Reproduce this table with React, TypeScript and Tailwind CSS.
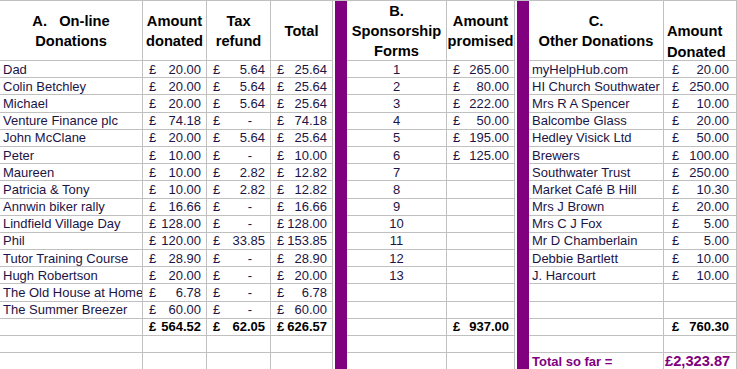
import React from "react";

type ARow = [string, string, string, string];

const online: ARow[] = [
  ["Dad", "20.00", "5.64", "25.64"],
  ["Colin Betchley", "20.00", "5.64", "25.64"],
  ["Michael", "20.00", "5.64", "25.64"],
  ["Venture Finance plc", "74.18", "-", "74.18"],
  ["John McClane", "20.00", "5.64", "25.64"],
  ["Peter", "10.00", "-", "10.00"],
  ["Maureen", "10.00", "2.82", "12.82"],
  ["Patricia & Tony", "10.00", "2.82", "12.82"],
  ["Annwin biker rally", "16.66", "-", "16.66"],
  ["Lindfield Village Day", "128.00", "-", "128.00"],
  ["Phil", "120.00", "33.85", "153.85"],
  ["Tutor Training Course", "28.90", "-", "28.90"],
  ["Hugh Robertson", "20.00", "-", "20.00"],
  ["The Old House at Home", "6.78", "-", "6.78"],
  ["The Summer Breezer", "60.00", "-", "60.00"],
];

const promised = ["265.00", "80.00", "222.00", "50.00", "195.00", "125.00"];

const other: [string, string][] = [
  ["myHelpHub.com", "20.00"],
  ["HI Church Southwater", "250.00"],
  ["Mrs R A Spencer", "10.00"],
  ["Balcombe Glass", "20.00"],
  ["Hedley Visick Ltd", "50.00"],
  ["Brewers", "100.00"],
  ["Southwater Trust", "250.00"],
  ["Market Café B Hill", "10.30"],
  ["Mrs J Brown", "20.00"],
  ["Mrs C J Fox", "5.00"],
  ["Mr D Chamberlain", "5.00"],
  ["Debbie Bartlett", "10.00"],
  ["J. Harcourt", "10.00"],
];

const cell = "border-r border-b border-[#c0c0c0] overflow-hidden whitespace-nowrap";
const head = `${cell} flex items-center justify-center text-center font-bold text-black text-[14.67px] leading-[20px] whitespace-pre`;

function Money({ v, bold, wide }: { v?: string; bold?: boolean; wide?: boolean }) {
  if (!v) return <div className={cell} />;
  return (
    <div
      className={`${cell} flex items-center justify-between ${wide ? "pr-[7px] pl-[8px]" : "pl-[6px] pr-[5px]"} ${bold ? "font-bold text-black" : ""}`}
    >
      <span>£</span>
      {v === "-" ? <span className="pr-[13px]">-</span> : <span>{v}</span>}
    </div>
  );
}

function Bar() {
  return (
    <div className="flex">
      <div className="w-[2px]" />
      <div className="flex-1 bg-[#800080]" />
    </div>
  );
}

export default function App() {
  const rows = Array.from({ length: 18 }, (_, i) => i);
  return (
    <div
      className="w-[737px] h-[369px] overflow-hidden bg-white text-[13px] text-[#1c1446] leading-none"
      style={{ fontFamily: '"Liberation Sans", Arial, sans-serif' }}
    >
      <div className="grid grid-cols-[143px_64px_64px_62px_14px_100px_68px_14px_135px_73px] grid-rows-[60px_repeat(18,17.2px)] border-t border-[#c0c0c0]">
        {/* Header */}
        <div className={head}>{"A.   On-line\nDonations"}</div>
        <div className={head}>{"Amount\ndonated"}</div>
        <div className={head}>{"Tax\nrefund"}</div>
        <div className={head}>Total</div>
        <Bar />
        <div className={head}>{"B.\nSponsorship\nForms"}</div>
        <div className={head}>{"Amount\npromised"}</div>
        <Bar />
        <div className={head}>{"C.\nOther Donations"}</div>
        <div className={`${cell} pl-[3px] pt-[20px] font-bold text-black text-[14.67px] leading-[21px] whitespace-pre`}>
          {"Amount\nDonated"}
        </div>

        {/* Body */}
        {rows.map((i) => {
          const a = online[i];
          const isTotal = i === 15;
          const last = i === 17;
          const c = other[i];
          return (
            <React.Fragment key={i}>
              <div className={`${cell} flex items-center pl-[3px]`}>{a ? a[0] : ""}</div>
              {a ? (
                <>
                  <Money v={a[1]} />
                  <Money v={a[2]} />
                  <Money v={a[3]} />
                </>
              ) : isTotal ? (
                <>
                  <Money v="564.52" bold />
                  <Money v="62.05" bold />
                  <Money v="626.57" bold />
                </>
              ) : (
                <>
                  <div className={cell} />
                  <div className={cell} />
                  <div className={cell} />
                </>
              )}
              <Bar />
              <div className={`${cell} flex items-center justify-center`}>{i < 13 ? i + 1 : ""}</div>
              {isTotal ? <Money v="937.00" bold /> : <Money v={promised[i]} />}
              <Bar />
              {last ? (
                <div className={`${cell} flex items-center pl-[3px] font-bold text-[#800080]`}>
                  Total so far =
                </div>
              ) : (
                <div className={`${cell} flex items-center pl-[3px]`}>{c ? c[0] : ""}</div>
              )}
              {last ? (
                <div className={`${cell} flex items-center justify-between pl-[1px] pr-[7px] font-bold text-[#800080] text-[14.67px]`}>
                  <span>£</span>
                  <span>2,323.87</span>
                </div>
              ) : isTotal ? (
                <Money v="760.30" bold wide />
              ) : (
                <Money v={c ? c[1] : undefined} wide />
              )}
            </React.Fragment>
          );
        })}
      </div>
    </div>
  );
}
